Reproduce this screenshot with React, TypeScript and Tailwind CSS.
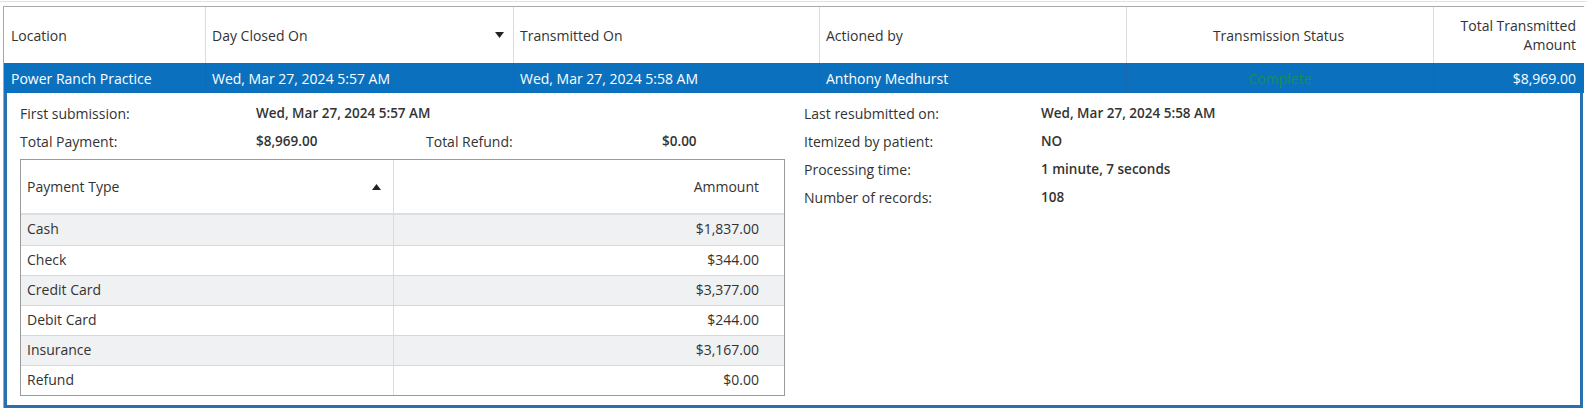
import { ReactNode } from "react";

type Column = {
  label: ReactNode;
  align?: "left" | "center" | "right";
  sort?: "asc" | "desc";
};

const columns: Column[] = [
  { label: "Location" },
  { label: "Day Closed On", sort: "desc" },
  { label: "Transmitted On" },
  { label: "Actioned by" },
  { label: "Transmission Status", align: "center" },
  {
    label: (
      <>
        Total Transmitted
        <br />
        Amount
      </>
    ),
    align: "right",
  },
];

const payments = [
  { type: "Cash", amount: "$1,837.00" },
  { type: "Check", amount: "$344.00" },
  { type: "Credit Card", amount: "$3,377.00" },
  { type: "Debit Card", amount: "$244.00" },
  { type: "Insurance", amount: "$3,167.00" },
  { type: "Refund", amount: "$0.00" },
];

const summary = [
  { label: "Last resubmitted on:", value: "Wed, Mar 27, 2024 5:58 AM" },
  { label: "Itemized by patient:", value: "NO" },
  { label: "Processing time:", value: "1 minute, 7 seconds" },
  { label: "Number of records:", value: "108" },
];

const gridCols = "grid grid-cols-[201px_308px_306px_307px_307px_152px]";

function SortArrow({ dir }: { dir: "asc" | "desc" }) {
  return (
    <svg width="9" height="6" viewBox="0 0 9 6" className="shrink-0">
      {dir === "desc" ? <path d="M0 0h9L4.5 6z" fill="#222" /> : <path d="M0 6h9L4.5 0z" fill="#222" />}
    </svg>
  );
}

function HeaderCell({ col, first }: { col: Column; first: boolean }) {
  const align =
    col.align === "center" ? "justify-center text-center" : col.align === "right" ? "justify-end text-right" : "";
  return (
    <div
      className={`flex items-center ${align} ${first ? "pl-[7px]" : "pl-[6px] border-l border-[#dcdcdc]"} pr-[9px] leading-[19px]`}
    >
      <span className={col.sort ? "flex-1" : ""}>{col.label}</span>
      {col.sort && <SortArrow dir={col.sort} />}
    </div>
  );
}

function PaymentTable() {
  return (
    <div className="mt-[4px] w-[765px] border border-[#9a9a9a]">
      <div className="grid grid-cols-[372px_1fr] h-[55px] border-b-2 border-[#dedede]">
        <div className="flex items-center pl-[6px] pr-[12px]">
          <span className="flex-1">Payment Type</span>
          <SortArrow dir="asc" />
        </div>
        <div className="flex items-center justify-end pr-[25px] border-l border-[#dcdcdc]">Ammount</div>
      </div>
      {payments.map((p, i) => (
        <div
          key={p.type}
          className={`grid grid-cols-[372px_1fr] h-[30px] leading-[28px] ${i % 2 === 0 ? "bg-[#eff1f3]" : "bg-white"} ${
            i > 0 ? "border-t border-[#d6d8da]" : ""
          }`}
        >
          <div className="pl-[6px]">{p.type}</div>
          <div className="text-right pr-[25px] border-l border-[#dcdcdc]">{p.amount}</div>
        </div>
      ))}
    </div>
  );
}

export default function App() {
  return (
    <div className="w-[1587px] h-[409px] bg-white font-['Open_Sans',sans-serif] text-[#333] text-[14px] overflow-hidden">
      <div className="h-px mt-px bg-[#e2e2e2]" />
      <div className="ml-[3px] mt-[4px] w-[1581px] border-t border-l border-[#a8a8a8]">
        <div className={`${gridCols} h-[56px]`}>
          {columns.map((c, i) => (
            <HeaderCell key={i} col={c} first={i === 0} />
          ))}
        </div>

        {/* selected row */}
        <div className={`${gridCols} h-[30px] bg-[#0b71bf] text-white`}>
          <div className="flex items-center pl-[7px]">Power Ranch Practice</div>
          <div className="flex items-center pl-[6px] border-l border-[#1b66a8]">Wed, Mar 27, 2024 5:57 AM</div>
          <div className="flex items-center pl-[6px] border-l border-[#1b66a8]">Wed, Mar 27, 2024 5:58 AM</div>
          <div className="flex items-center pl-[6px] border-l border-[#1b66a8]">Anthony Medhurst</div>
          <div className="flex items-center justify-center border-l border-[#1b66a8] text-[#178f52]">Complete</div>
          <div className="flex items-center justify-end pr-[9px] border-l border-[#1b66a8]">$8,969.00</div>
        </div>

        {/* expanded detail */}
        <div className="h-[315px] mr-[1px] border-x-[3px] border-b-[3px] border-[#2a6fae] flex">
          <div className="w-[797px] shrink-0 pl-[13px] pt-[6px]">
            <div className="grid grid-cols-[236px_170px_236px_1fr] auto-rows-[28px] items-center">
              <span>First submission:</span>
              <span className="col-span-3 font-semibold text-[13.5px]">Wed, Mar 27, 2024 5:57 AM</span>
              <span>Total Payment:</span>
              <span className="font-semibold text-[13.5px]">$8,969.00</span>
              <span>Total Refund:</span>
              <span className="font-semibold text-[13.5px]">$0.00</span>
            </div>
            <PaymentTable />
          </div>
          <div className="pt-[6px] grid grid-cols-[237px_1fr] auto-rows-[28px] items-center content-start">
            {summary.map((s) => (
              <div key={s.label} className="contents">
                <span>{s.label}</span>
                <span className="font-semibold text-[13.5px]">{s.value}</span>
              </div>
            ))}
          </div>
        </div>
      </div>
    </div>
  );
}
